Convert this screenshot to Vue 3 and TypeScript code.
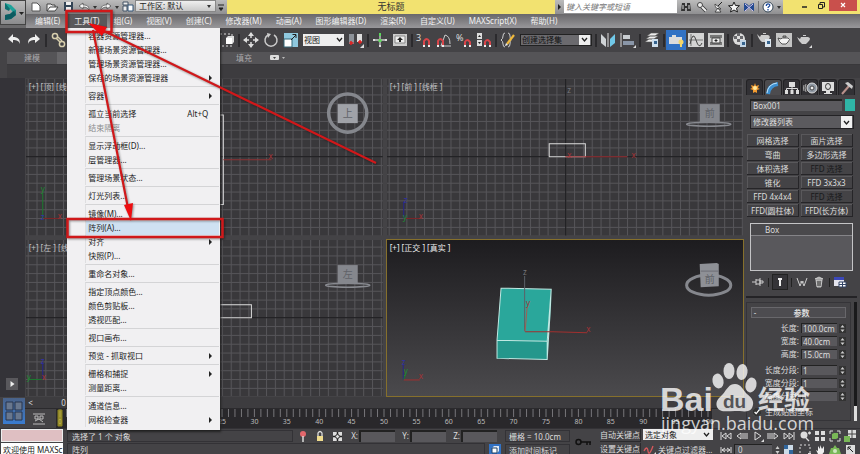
<script setup lang="ts">
import { ref } from 'vue'

interface MenuEntry {
  label: string
  key?: string
  sub?: boolean
  off?: boolean
  on?: boolean
}

const menus = ['编辑(E)', '工具(T)', '组(G)', '视图(V)', '创建(C)', '修改器(M)', '动画(A)', '图形编辑器(D)', '渲染(R)', '自定义(U)', 'MAXScript(X)', '帮助(H)']

const toolGroups: MenuEntry[][] = [
  [{ label: '容器资源管理器...' }, { label: '新建场景资源管理器...' }, { label: '管理场景资源管理器...' }, { label: '保存的场景资源管理器', sub: true }],
  [{ label: '容器', sub: true }],
  [{ label: '孤立当前选择', key: 'Alt+Q' }, { label: '结束隔离', off: true }],
  [{ label: '显示浮动框(D)...' }, { label: '层管理器...' }],
  [{ label: '管理场景状态...' }],
  [{ label: '灯光列表...' }],
  [{ label: '镜像(M)...' }, { label: '阵列(A)...', on: true }, { label: '对齐', sub: true }, { label: '快照(P)...' }],
  [{ label: '重命名对象...' }],
  [{ label: '指定顶点颜色...' }, { label: '颜色剪贴板...' }, { label: '透视匹配...' }],
  [{ label: '视口画布...' }],
  [{ label: '预览 - 抓取视口', sub: true }],
  [{ label: '栅格和捕捉', sub: true }, { label: '测量距离...' }],
  [{ label: '通道信息...' }, { label: '网格检查器', sub: true }],
]

const modifiers = [
  { label: '网格选择' }, { label: '面片选择' },
  { label: '弯曲' }, { label: '多边形选择' },
  { label: '体积选择' }, { label: 'FFD 选择', off: true },
  { label: '锥化' }, { label: 'FFD 3x3x3' },
  { label: 'FFD 4x4x4' }, { label: 'FFD 选择', off: true },
  { label: 'FFD(圆柱体)' }, { label: 'FFD(长方体)' },
]

const sizes = ref([
  { id: 'len', label: '长度:', value: '100.0cm' },
  { id: 'wid', label: '宽度:', value: '40.0cm' },
  { id: 'hei', label: '高度:', value: '15.0cm' },
])
const segments = ref([
  { id: 'lseg', label: '长度分段:', value: '1' },
  { id: 'wseg', label: '宽度分段:', value: '1' },
  { id: 'hseg', label: '高度分段:', value: '1' },
])
const coords = ref([{ axis: 'X', value: '' }, { axis: 'Y', value: '' }, { axis: 'Z', value: '' }])
const objectName = ref('Box001')
const mapping = ref(true)
const frame = ref('0')

const ticks = Array.from({ length: 101 }, (_, i) => ({ n: i, x: 4 + i * 6.48 }))
</script>

<template>
  <div class="app">
    <header class="head">
      <button class="logo" aria-label="应用程序菜单">
        <svg width="26" height="26" viewBox="0 0 26 26">
          <path d="M4 2l6 2 5 5-2 3-4-4-5-1z" fill="#1fa39a" />
          <path d="M4 2v6l4 2 1-2z" fill="#0e6f70" />
          <path d="M15 9v5l-5 4-6 1v-5l5-1 3-3z" fill="#14807f" />
          <path d="M4 14l5-1 4-3 2 4-5 4-6 1z" fill="#0c5b60" />
          <path d="M18 11h5l-2.500 3z" fill="#222" />
        </svg>
      </button>
      <div class="titlebar">
        <div class="quick">
          <button aria-label="新建"><svg viewBox="0 0 14 14"><path d="M3 3h5l3 3v5H3z" fill="#fff" stroke="#555" /></svg></button>
          <button aria-label="打开"><svg viewBox="0 0 14 14"><path d="M2 11V4h4l1 1h3v2" fill="#eee" stroke="#444" /><path d="M2 11l3-4h8l-3 4z" fill="#fff" stroke="#444" /></svg></button>
          <button aria-label="保存"><svg viewBox="0 0 14 14"><path d="M3 2h9v9H3z" fill="#345" /><path d="M5 2h5v3H5zM5 7h5v4H5z" fill="#eee" /></svg></button>
          <button aria-label="撤消"><svg viewBox="0 0 14 14"><path d="M2 6l4-3v2c4 0 6 1 6 5-1-2-3-3-6-3v2z" fill="#f4f4f4" stroke="#444" stroke-width=".7" /></svg></button>
          <i class="caret"></i>
          <button aria-label="重做"><svg viewBox="0 0 14 14"><path d="M12 6L8 3v2c-4 0-6 1-6 5 1-2 3-3 6-3v2z" fill="#f4f4f4" stroke="#444" stroke-width=".7" /></svg></button>
          <i class="caret"></i>
          <button aria-label="项目"><svg viewBox="0 0 14 14"><path d="M2 2h5v3H2zM2 6h4v5H2z" fill="#eee" stroke="#456" /><path d="M7 5h5v6H7z" fill="#fff" stroke="#357" /></svg></button>
        </div>
        <label class="pick workspace">
          <select aria-label="工作区"><option>工作区: 默认</option></select>
          <i class="caret"></i>
        </label>
        <button class="more" aria-label="自定义"><svg viewBox="0 0 10 12"><path d="M2 4h6M3 7h4L5 9.500z" stroke="#222" fill="#222" /></svg></button>
        <h1 class="title">无标题</h1>
        <button class="expand" aria-label="展开"><svg viewBox="0 0 8 14"><path d="M3 4l3 3-3 3z" fill="#222" /></svg></button>
        <input class="search" type="search" placeholder="键入关键字或短语" aria-label="搜索" />
        <div class="info">
          <button aria-label="搜索"><svg viewBox="0 0 14 14"><path d="M3 3h3v3h2V3h3l1 8H8V8H6v3H2z" fill="#333" /><path d="M4 5v4M10 5v4" stroke="#ddd" /></svg></button>
          <button aria-label="工具"><svg viewBox="0 0 14 14"><path d="M5 5l6 6" stroke="#333" stroke-width="3.500" /><path d="M5 5l6 6" stroke="#eee" stroke-width="2" /><circle cx="5" cy="5" r="2.500" fill="#eee" stroke="#444" /></svg></button>
          <button aria-label="通信"><svg viewBox="0 0 14 14"><path d="M4 4c0 4 2 5 6 5zM4 12h6l-3-4z" fill="#f4f4f4" stroke="#333" stroke-width=".8" /><path d="M7 6l4-4" stroke="#222" /></svg></button>
          <button aria-label="收藏"><svg viewBox="0 0 14 14"><path d="M7 2l1.500 3.500 4 .2-3 2.500 1 3.800L7 10l-3.500 2 1-3.800-3-2.500 4-.2z" fill="#f4f4f4" stroke="#222" /></svg></button>
          <button aria-label="交流"><svg viewBox="0 0 14 14"><path d="M2 3l3 1 2 2 2-2 3-1v8l-3-1-2-2-2 2-3 1z" fill="#234a91" /><path d="M3 4l8 7M11 4l-8 7" stroke="#dce" /></svg></button>
          <i class="bar"></i>
          <button aria-label="帮助"><svg viewBox="0 0 14 14"><circle cx="7" cy="7" r="5" fill="#fff" stroke="#345" /><path d="M5.300 6c0-3 3.500-2.500 3.500-.6C8.800 6.600 7 6.500 7 8M7 9v1.500" fill="none" stroke="#1e4ca0" stroke-width="1.300" /></svg></button>
          <i class="caret"></i>
        </div>
        <div class="win">
          <button aria-label="最小化"><svg viewBox="0 0 14 12"><path d="M5 7h5" stroke="#222" stroke-width="1.500" /></svg></button>
          <button aria-label="还原"><svg viewBox="0 0 14 12"><path d="M4.500 4.500h4v4h-4zM6 4V2.500h4.500V7H9" fill="none" stroke="#222" /></svg></button>
          <button class="close" aria-label="关闭"><svg viewBox="0 0 14 12"><path d="M5 3l4 4M9 3L5 7" stroke="#fff" stroke-width="1.200" /></svg></button>
        </div>
      </div>
      <nav class="menubar">
        <div v-for="m in menus" :key="m" class="menu" :class="{ open: m === '工具(T)' }">
          <button>{{ m }}</button>
          <div v-if="m === '工具(T)'" class="drop">
            <div v-for="(g, gi) in toolGroups" :key="gi" class="group">
              <button v-for="e in g" :key="e.label" class="entry" :class="{ off: e.off, on: e.on }" :disabled="e.off">
                <span>{{ e.label }}</span>
                <span v-if="e.key" class="key">{{ e.key }}</span>
                <svg v-if="e.sub" width="4" height="6" viewBox="0 0 4 6"><path d="M0 0l3 3-3 3z" fill="#222" /></svg>
              </button>
            </div>
          </div>
        </div>
      </nav>
    </header>

    <div class="tools">
      <button aria-label="撤消"><svg viewBox="0 0 16 16"><path d="M2 7l5-5v3c5 0 7 2 7 7-1-3-3-4-7-4v3z" fill="#eee" /></svg></button>
      <button aria-label="重做"><svg viewBox="0 0 16 16"><path d="M14 7L9 2v3c-5 0-7 2-7 7 1-3 3-4 7-4v3z" fill="#eee" /></svg></button>
      <i class="sep"></i>
      <button aria-label="链接"><svg viewBox="0 0 16 16"><g fill="none" stroke="#d8cfae" stroke-width="1.500"><circle cx="5" cy="4" r="2.600" /><circle cx="12" cy="12" r="2.600" /><path d="M6 6l4 4M8 5l4 4" /></g></svg></button>
      <button aria-label="断开链接"><svg viewBox="0 0 16 16"><circle cx="5" cy="5" r="3" fill="none" stroke="#ccc" /></svg></button>
      <button aria-label="绑定"><svg viewBox="0 0 16 16"><path d="M2 8q3-6 6 0t6 0" fill="none" stroke="#ccc" /></svg></button>
      <label class="pick filter"><select aria-label="选择过滤器"><option>全部</option></select></label>
      <button aria-label="选择对象"><svg viewBox="0 0 16 16"><path d="M4 2l8 7H8l-4 4z" fill="#ddd" /></svg></button>
      <button aria-label="按名称选择"><svg viewBox="0 0 16 16"><path d="M3 4h10M3 8h10M3 12h10" stroke="#ddd" /></svg></button>
      <button aria-label="窗口/交叉"><svg viewBox="0 0 16 16"><path d="M1 2h12v12H1" fill="none" stroke="#ddd" stroke-dasharray="2 2" /><path d="M7 6l2-2h6v6l-2 2H7z" fill="#ddd" /><path d="M7 6h6v6H7z" fill="#fff" /></svg></button>
      <i class="sep"></i>
      <button aria-label="移动"><svg viewBox="0 0 16 16"><path d="M8 1v14M1 8h14" stroke="#ddd" stroke-width="1.500" stroke-dasharray="5 4" /><path d="M8 0l3 4H5zM8 16l3-4H5zM0 8l4-3v6zM16 8l-4-3v6z" fill="#ddd" /></svg></button>
      <button aria-label="旋转"><svg viewBox="0 0 16 16"><path d="M11 3A6 6 0 1 1 5 3" fill="none" stroke="#ccc" stroke-width="1.500" /><path d="M4 1l4 1-3 4z" fill="#ccc" /></svg></button>
      <button aria-label="缩放"><svg viewBox="0 0 16 16"><path d="M1 1h14v14H1z" fill="#8fc8de" /><path d="M1 7h8v8H1z" fill="#fff" stroke="#367" /><path d="M8 8l5-5M9.500 2.500H13V6" fill="none" stroke="#222" /></svg></button>
      <label class="pick system"><select aria-label="参考坐标系"><option>视图</option></select><svg width="9" height="6" viewBox="0 0 9 6"><path d="M2 1l2.500 3L7 1" fill="none" stroke="#222" stroke-width="1.300" /></svg></label>
      <button aria-label="轴点中心"><svg viewBox="0 0 16 16"><path d="M1 2h5v10H1z" fill="#8d9299" /><path d="M9 2h5v8H9z" fill="#ddd" /><path d="M3 9v4M1.500 11h4M12 8v4M10 10h4" stroke="#e02020" stroke-width="1.500" /><path d="M16 12v4h-4z" fill="#ddd" /></svg></button>
      <i class="sep"></i>
      <button aria-label="操纵"><svg viewBox="0 0 16 16"><path d="M8 2v12M2 8h12" stroke="#ccc" stroke-width="1.300" /><path d="M6.500 7h3v3h-3zM7 1h2v3H7z" fill="#5bd75b" /><path d="M1 7h2v2H1zM13 7h2v2h-2zM7 13h2v2H7z" fill="#ddd" /></svg></button>
      <button aria-label="键盘快捷键覆盖"><svg viewBox="0 0 16 16"><path d="M1 2h14v12H1z" fill="#ccc" /><path d="M3 4h10v7H3z" fill="#eee" stroke="#888" /><path d="M8 5l3 3H9v2H7V8H5z" fill="#222" /></svg></button>
      <i class="sep"></i>
      <button aria-label="捕捉开关"><svg viewBox="0 0 16 16"><text x="0" y="9" font-size="9" fill="#ddd">3</text><path d="M8 14V9q3-4 5 0v5" fill="none" stroke="#d8454a" stroke-width="2" /><path d="M7 13h2v2H7zM12 13h2v2h-2z" fill="#eee" /></svg></button>
      <button aria-label="角度捕捉"><svg viewBox="0 0 16 16"><path d="M15 14H5L9 3q5 1 5 9" fill="none" stroke="#ccc" /><path d="M2 14V9q2-4 5 0v5" fill="none" stroke="#d8454a" stroke-width="2" /><path d="M1 13h2v2H1zM6 13h2v2H6z" fill="#eee" /></svg></button>
      <button aria-label="百分比捕捉"><svg viewBox="0 0 16 16"><text x="0" y="9" font-size="9" fill="#ddd">%</text><path d="M9 14v-4q2-4 5 0v4" fill="none" stroke="#d8454a" stroke-width="2" /><path d="M8 13h2v2H8zM13 13h2v2h-2z" fill="#eee" /></svg></button>
      <button aria-label="微调器捕捉"><svg viewBox="0 0 16 16"><path d="M1 1h5v6H1zM1 8h5v6H1z" fill="#ddd" /><path d="M2 5l1.500-2L5 5zM2 10l1.500 2L5 10z" fill="#222" /><path d="M9 14v-4q2-4 5 0v4" fill="none" stroke="#d8454a" stroke-width="2" /><path d="M8 13h2v2H8zM13 13h2v2h-2z" fill="#eee" /></svg></button>
      <i class="sep"></i>
      <button aria-label="编辑命名选择集"><svg viewBox="0 0 16 16"><path d="M5 1Q3 1 3 4T1 8q2 1 2 4t2 3M8 1q2 0 2 3t1 4q-1 1-1 4t-2 3" fill="none" stroke="#ccc" /><path d="M7 12l7-9" stroke="#f0b93c" stroke-width="2.200" /><path d="M5 14l1-3 2 2z" fill="#eee" /></svg></button>
      <label class="pick sets"><select aria-label="命名选择集"><option>创建选择集</option></select><svg width="11" height="10" viewBox="0 0 11 10"><path d="M0 0h11v10H0z" fill="#eee" /><path d="M3 3l2.500 3L8 3" fill="none" stroke="#222" stroke-width="1.300" /></svg></label>
      <i class="sep"></i>
      <button aria-label="镜像"><svg viewBox="0 0 16 16"><path d="M1 2l5 5v8l-5-4z" fill="#cfd3d6" /><path d="M15 2l-5 5v8l5-4z" fill="#70c8e8" /><path d="M8 1v14" stroke="#ddd" /></svg></button>
      <button aria-label="对齐"><svg viewBox="0 0 16 16"><path d="M1 1v14" stroke="#ddd" /><path d="M3 3h7v4H3z" fill="#c8ccd0" /><path d="M3 9h11v4H3z" fill="#8a96a8" /><path d="M16 13v3h-3z" fill="#ddd" /></svg></button>
      <i class="sep"></i>
      <button aria-label="层管理器"><svg viewBox="0 0 16 16"><path d="M1 10l4-3h8l-4 3zM2 7l4-3h8l-4 3zM3 4l4-3h8l-4 3z" fill="#eee" stroke="#555" stroke-width=".6" /><path d="M8 7h6v8H8z" fill="#cfe0ee" /><path d="M10 9h3v3h-3z" fill="#36648f" /></svg></button>
      <i class="sep"></i>
      <button class="lit" aria-label="切换功能区"><svg viewBox="0 0 16 16"><path d="M1 5h3V3h4v2h6v7H1z" fill="#dcdcdc" /><circle cx="13" cy="10" r="2.500" fill="#f4d56a" /><path d="M12 12h2v3h-2z" fill="#f4d56a" /></svg></button>
      <button aria-label="曲线编辑器"><svg viewBox="0 0 16 16"><path d="M0 1h16v14H0z" fill="#d4d4d4" /><path d="M3 2v12M1 8h14" stroke="#777" /><path d="M2 12q3-14 6-4t6 3" fill="none" stroke="#444" /></svg></button>
      <button aria-label="图解视图"><svg viewBox="0 0 16 16"><path d="M0 1h16v14H0z" fill="#ccc" /><path d="M2 3h12v3H2zM2 10h12v3H2z" fill="#777" /><path d="M4 6h8v5H4z" fill="#eee" stroke="#444" /><path d="M8 7v3M6.500 8.500h3" stroke="#222" /></svg></button>
      <i class="sep"></i>
      <button aria-label="材质编辑器"><svg viewBox="0 0 16 16"><circle cx="7" cy="7" r="6" fill="#ddd" /><path d="M2 4h3v3H2zM8 4h3v3H8zM5 7h3v3H5zM5 1h3v3H5z" fill="#68686c" /><path d="M8 8h6v7H8z" fill="#c3d6e6" /><path d="M10 10h3v3h-3z" fill="#36648f" /></svg></button>
      <i class="sep"></i>
      <button aria-label="渲染设置"><svg viewBox="0 0 16 16"><path d="M1 2l3 3 1-2h7q3 1 1 4l-3 3H6Q3 8 1 2zM7 1h3v1H7z" fill="#ccc" /><path d="M9 7h6v8H9z" fill="#dde6ee" /><path d="M11 9h3v3h-3z" fill="#36648f" /></svg></button>
      <button aria-label="渲染帧窗口"><svg viewBox="0 0 16 16"><path d="M0 1h16v14H0z" fill="#c4c4c4" /><path d="M2 6l3 1 1-1h6q3 1 0 4l-2 2H6Q3 10 2 6zM7 4h3v1H7z" fill="#f4f4f4" stroke="#333" stroke-width=".8" /></svg></button>
      <button aria-label="渲染产品"><svg viewBox="0 0 16 16"><path d="M1 5l3 2 1-2h7q4 1 0 5l-2 2H6Q3 10 1 5zM7 3h3v1H7z" fill="#ccc" /><path d="M16 13v3h-3z" fill="#ddd" /></svg></button>
    </div>

    <div class="ribbon-tabs">
      <button>建模</button>
      <button class="active">自由形式</button>
      <button>选择</button>
      <button>对象绘制</button>
      <button class="fill">填充</button>
      <button class="shrink" aria-label="最小化功能区"><svg width="18" height="8" viewBox="0 0 18 8"><rect x="1" y="1" width="9" height="5" rx="1" fill="#ddd" /><path d="M4 3h3L5.500 5z" fill="#444" /><path d="M13 3h3l-1.500 2z" fill="#bbb" /></svg></button>
    </div>
    <div class="ribbon"></div>

    <main class="body">
      <section class="stage">
        <aside class="rail">
          <button aria-label="展开"><svg width="12" height="12" viewBox="0 0 12 12"><path d="M4.500 3l4 3-4 3z" fill="#eee" /></svg></button>
        </aside>
        <div class="views">
          <svg class="view" viewBox="0 0 356 156" preserveAspectRatio="xMidYMid slice">
            <defs>
              <pattern id="grid" x="178" y="77" width="8.8" height="8.8" patternUnits="userSpaceOnUse"><path d="M0 .5h8.800M.5 0v8.800" stroke="#565559" fill="none" /></pattern>
              <linearGradient id="sky" x1="0" y1="0" x2="0" y2="1"><stop offset="0" stop-color="#1d1c1f" /><stop offset="1" stop-color="#4b4a4d" /></linearGradient>
            </defs>
            <path d="M0 0h356v156H0z" fill="#39383b" /><path d="M0 0h356v156H0z" fill="url(#grid)" />
            <path d="M0 77.500h356" stroke="#151517" />
            <path d="M150 36h47v89h-47" fill="none" stroke="#ddd" />
            <path d="M197 80.500h48" stroke="#8c3033" /><text x="242" y="80" class="red">x</text>
            <path d="M17 139v-25" stroke="#1b7a2e" /><path d="M18 139h16" stroke="#7d2427" />
            <text x="15" y="113" class="green">y</text><text x="32" y="140" class="red">x</text><text x="15" y="141" class="blue">z</text>
            <circle cx="321" cy="34" r="19" fill="none" stroke="#85878d" stroke-width="3.500" />
            <path d="M311 25h20v19h-20z" fill="#a0a2a8" /><text x="316" y="38" class="face">上</text>
            <text x="3" y="11" class="tag">[+] [顶] [线框]</text>
          </svg>
          <svg class="view" viewBox="0 0 356 156" preserveAspectRatio="xMidYMid slice">
            <path d="M0 0h356v156H0z" fill="#39383b" /><path d="M0 0h356v156H0z" fill="url(#grid)" />
            <path d="M0 77.500h356M178.500 0v156" stroke="#151517" />
            <path d="M162 64.500h36v13h-36z" fill="none" stroke="#ddd" />
            <path d="M178 77.500h62" stroke="#9c3236" /><text x="244" y="79" class="red">x</text><text x="180" y="79" class="red">x</text><text x="180" y="14" class="dim">z</text>
            <path d="M17 139v-17" stroke="#25258c" /><path d="M18 139h16" stroke="#7d2427" />
            <text x="17" y="124" class="blue">z</text><text x="32" y="140" class="red">x</text><text x="16" y="141" class="green">y</text>
            <ellipse cx="321" cy="45" rx="22" ry="2" fill="none" stroke="#888a90" stroke-width="1.500" />
            <path d="M312 25h20v19h-20z" fill="#85878d" /><text x="317" y="38" class="face">前</text>
            <text x="3" y="11" class="tag">[+] [前 ] [线框 ]</text>
          </svg>
          <svg class="view" viewBox="0 0 356 156" preserveAspectRatio="xMidYMid slice">
            <path d="M0 0h356v156H0z" fill="#39383b" /><path d="M0 0h356v156H0z" fill="url(#grid)" />
            <path d="M0 77.500h356" stroke="#151517" />
            <path d="M130 64.500h95v13h-95z" fill="none" stroke="#ddd" />
            <path d="M17 139v-17" stroke="#25258c" /><path d="M2 139h15" stroke="#1b7a2e" />
            <text x="15" y="124" class="blue">z</text><text x="1" y="140" class="green">y</text><text x="16" y="140" class="red">x</text>
            <ellipse cx="321" cy="45" rx="22" ry="2" fill="none" stroke="#888a90" stroke-width="1.500" />
            <path d="M311 25h20v19h-20z" fill="#85878d" /><text x="316" y="38" class="face">左</text>
            <text x="3" y="11" class="tag">[+] [左 ] [线框 ]</text>
          </svg>
          <svg class="view current" viewBox="0 0 356 156" preserveAspectRatio="xMidYMid slice">
            <path d="M0 0h356v156H0z" fill="url(#sky)" />
            <path d="M114 48l50 1-4 52-50-1z" fill="#2aa79b" /><path d="M110 100l50 1v18l-50-1z" fill="#24978c" />
            <path d="M160 101l4-52v16l-4 54z" fill="#1a5f5a" />
            <path d="M114 48l50 1-1 22-3 48-50-1v-18zM110 100l50 1v18M160 101l4-52" fill="none" stroke="#bfe9e3" />
            <path d="M137.500 91V36" stroke="#5b6168" /><text x="136" y="35" class="dim">z</text>
            <path d="M138 91l2-24" stroke="#a35f50" /><text x="139" y="66" class="red">y</text>
            <path d="M138 91.500h28l34 1" stroke="#a1302f" fill="none" /><text x="199" y="92" class="red">x</text>
            <path d="M16.500 139v-15" stroke="#25258c" /><path d="M17 139l2-6" stroke="#1b7a2e" /><path d="M17 139.500h16" stroke="#a1302f" />
            <text x="15" y="125" class="blue">z</text><text x="17" y="134" class="green">y</text><text x="32" y="139" class="red">x</text>
            <ellipse cx="321" cy="45" rx="22" ry="10" fill="none" stroke="#85878d" stroke-width="3" />
            <path d="M312 24l17-1 2 1v22l-18 1z" fill="#8e9096" /><path d="M313 31h18" stroke="#6d6f75" /><text x="317" y="43" class="face">前</text>
            <text x="3" y="11" class="tag lighter">[+] [正交 ] [真实 ]</text>
          </svg>
        </div>
        <button class="layout" aria-label="视口布局"><svg width="22" height="26" viewBox="0 0 22 26"><path d="M3 4h7v8H3zM12 4h7v8h-7zM3 14h7v8H3zM12 14h7v8h-7z" fill="#68778e" stroke="#26354d" /></svg></button>
        <div class="slider"><button aria-label="上一帧">&lt;</button><span>0 / 100</span></div>
        <div class="track">
          <button aria-label="迷你曲线编辑器"><svg width="14" height="12" viewBox="0 0 14 12"><path d="M1 1h12M1 11h12M3 3h3v3H3zM8 3h3v3H8zM3 8l4-2 4 3" fill="none" stroke="#bbb" /></svg></button>
          <svg class="ruler" viewBox="0 0 689 19" preserveAspectRatio="xMinYMin meet">
            <path d="M0 0h656v19H0z" fill="#29282b" />
            <g v-for="t in ticks" :key="t.n">
              <path :d="`M${t.x} 0v8`" stroke="#77767a" />
              <text v-if="t.n % 5 === 0" :x="t.x" y="15" class="num">{{ t.n }}</text>
            </g>
            <path d="M2 1h4v16H2z" fill="#c6b82e" fill-opacity=".7" stroke="#8d8420" />
          </svg>
        </div>
      </section>

      <aside class="panel">
        <div class="tabs">
          <button aria-label="创建"><svg viewBox="0 0 16 14"><path d="M8 2l1 3 3-1-1 3 2 1-3 1v3l-2-1-2 1V9L3 8l2-1-1-3 3 1z" fill="#f29b30" /><circle cx="8" cy="7" r="2" fill="#ffe9a0" /></svg></button>
          <button class="active" aria-label="修改"><svg viewBox="0 0 16 14"><path d="M3 13Q4 4 13 3" fill="none" stroke="#3d8fd0" stroke-width="4" /><path d="M2 12Q3 3 12 2" fill="none" stroke="#bfe3fa" /></svg></button>
          <button aria-label="层次"><svg viewBox="0 0 16 14"><path d="M5 1h6v5H5zM1 9h3v4H1zM6.500 9h3v4h-3zM12 9h3v4h-3z" fill="#ddd" /><path d="M2.500 9V7.500h11V9M8 6v3" fill="none" stroke="#ddd" /></svg></button>
          <button aria-label="运动"><svg viewBox="0 0 16 14"><circle cx="10" cy="7" r="5" fill="#8f98a3" stroke="#ddd" /><circle cx="10" cy="7" r="2" fill="#eee" stroke="#444" /><path d="M4 3q-2 4 0 8M2 4q-1 3 0 6" fill="none" stroke="#aaa" /></svg></button>
          <button aria-label="显示"><svg viewBox="0 0 16 14"><path d="M2 1h12v9H2zM6 10h4v2H6zM4 12h8v1H4z" fill="#ddd" /><ellipse cx="8" cy="5.500" rx="2.500" ry="3" fill="none" stroke="#333" /></svg></button>
          <button aria-label="实用程序"><svg viewBox="0 0 16 14"><path d="M3 13l7-8" stroke="#b9908a" stroke-width="2" /><path d="M6 2l3-1 5 4-1 3-4-3z" fill="#ccc" /></svg></button>
        </div>
        <div class="name">
          <input v-model="objectName" aria-label="对象名称" />
          <button class="swatch" aria-label="对象颜色"></button>
        </div>
        <label class="pick mods"><select aria-label="修改器列表"><option>修改器列表</option></select><svg width="11" height="12" viewBox="0 0 11 12"><path d="M0 0h11v12H0z" fill="#f2f2f2" /><path d="M3 5l2.500 3L8 5" fill="none" stroke="#222" stroke-width="1.300" /></svg></label>
        <div class="sets-grid">
          <button v-for="(b, i) in modifiers" :key="i" :disabled="b.off">{{ b.label }}</button>
        </div>
        <ul class="stack"><li>Box</li></ul>
        <div class="stack-tools">
          <button aria-label="锁定堆栈"><svg viewBox="0 0 14 14"><path d="M1 7h4M5 4v6M5 5h4v4H5M9 3v8M9 6h3v2H9" fill="none" stroke="#ccc" /></svg></button>
          <i></i>
          <button class="boxed" aria-label="显示最终结果"><svg viewBox="0 0 14 14"><path d="M5 3h4v2H8v6H6V5H5z" fill="#eee" /></svg></button>
          <i></i>
          <button aria-label="使唯一"><svg viewBox="0 0 14 14"><path d="M2 3l3 8 2-5 2 5 3-8M5 7h4" fill="none" stroke="#ccc" /></svg></button>
          <button aria-label="移除修改器"><svg viewBox="0 0 14 14"><path d="M4 5h6l-1 7H5zM3 4l4-2 4 2z" fill="#999" stroke="#ddd" stroke-width=".8" /><path d="M6 6v5M8 6v5" stroke="#444" /></svg></button>
          <i></i>
          <button aria-label="配置修改器集"><svg viewBox="0 0 14 14"><path d="M1 2h10v9H1z" fill="#e4e4ee" /><path d="M1 2h10v3H1z" fill="#3c48b8" /><path d="M6 7h7v5H6z" fill="#fff" stroke="#346" /><path d="M9.500 7v5M6 9.500h7" stroke="#346" /></svg></button>
        </div>
        <div class="rollout">
          <div class="inner">
            <button class="bar-title"><span>-</span><b>参数</b></button>
            <div class="rows">
              <div v-for="p in sizes" :key="p.id" class="row">
                <label :for="p.id">{{ p.label }}</label><input :id="p.id" v-model="p.value" />
                <svg width="7" height="9" viewBox="0 0 7 9"><path d="M0 0h7v9H0z" fill="#333" /><path d="M1.500 3.500l2-2.500 2 2.500zM1.500 5.500l2 2.500 2-2.500z" fill="#ccc" /></svg>
              </div>
            </div>
            <div class="rows">
              <div v-for="p in segments" :key="p.id" class="row">
                <label :for="p.id">{{ p.label }}</label><input :id="p.id" v-model="p.value" />
                <svg width="7" height="9" viewBox="0 0 7 9"><path d="M0 0h7v9H0z" fill="#333" /><path d="M1.500 3.500l2-2.500 2 2.500zM1.500 5.500l2 2.500 2-2.500z" fill="#ccc" /></svg>
              </div>
            </div>
            <label class="check"><input v-model="mapping" type="checkbox" />生成贴图坐标</label>
          </div>
          <div class="scroll"><i></i></div>
        </div>
      </aside>
    </main>

    <footer class="foot">
      <div class="script">
        <div class="pink"></div>
        <div class="listener">欢迎使用 MAXSc</div>
      </div>
      <div class="status">
        <div class="line">
          <output class="well">选择了 1 个 对象</output>
          <button aria-label="孤立"><svg viewBox="0 0 12 12"><circle cx="6" cy="4" r="3" fill="#e2676c" /><path d="M6 6v6" stroke="#ddd" stroke-width="1.500" /></svg></button>
          <button aria-label="锁定"><svg viewBox="0 0 12 12"><path d="M3 6h6v5H3z" fill="#f0dc8e" /><path d="M4 6V3q2-3 4 0v3" fill="none" stroke="#ddd" stroke-width="1.300" /></svg></button>
          <button aria-label="绝对模式"><svg viewBox="0 0 12 12"><path d="M2 2h9v9H2z" fill="#ddd" /><path d="M2 6.500h2M9 6.500h2M6.500 2v2M6.500 9v2" stroke="#222" stroke-width="1.500" /><circle cx="6.500" cy="6.500" r="2" fill="none" stroke="#222" /></svg></button>
          <label v-for="c in coords" :key="c.axis" class="coord">{{ c.axis }}:<input v-model="c.value" /></label>
          <output class="gridsize">栅格 = 10.0cm</output>
        </div>
        <div class="line">
          <output class="well prompt">阵列</output>
          <button class="lit" aria-label="自适应降级"><svg viewBox="0 0 12 12"><path d="M3 4l2-2h5v5l-2 2H3z" fill="#dfe8f4" /><path d="M3 4h5v5H3z" fill="#fff" stroke="#246" /></svg></button>
          <output class="gridsize">添加时间标记</output>
        </div>
      </div>
      <button class="setkey" aria-label="设置关键点"><svg width="20" height="14" viewBox="0 0 20 14"><circle cx="4.500" cy="7" r="2.500" fill="none" stroke="#111" stroke-width="1.500" /><path d="M7 7h10M13 7v3M16 7v3" stroke="#111" stroke-width="1.500" /></svg></button>
      <div class="keys">
        <button>自动关键点</button>
        <label class="pick sel"><select aria-label="选定对象"><option>选定对象</option></select><svg width="9" height="6" viewBox="0 0 9 6"><path d="M2 1l2.500 3L7 1" fill="none" stroke="#222" stroke-width="1.300" /></svg></label>
        <button>设置关键点</button>
        <div class="keyfilter"><svg width="14" height="12" viewBox="0 0 14 12"><path d="M1 7q3-6 4 0t5-5" fill="none" stroke="#d8585c" stroke-width="1.300" /><path d="M13 8v3h-3z" fill="#ddd" /></svg><button>关键点过滤器...</button></div>
      </div>
      <div class="play">
        <div class="line">
          <button aria-label="转至开头"><svg viewBox="0 0 12 12"><path d="M1 2v8M6 3L2 6l4 3zM11 3L7 6l4 3z" fill="none" stroke="#ddd" /></svg></button>
          <button aria-label="上一帧"><svg viewBox="0 0 12 12"><path d="M5 3L1 6l4 3zM7 3v6M9 3v6M11 3v6" fill="none" stroke="#ddd" /></svg></button>
          <button aria-label="播放"><svg viewBox="0 0 12 12"><path d="M3 2l6 4-6 4z" fill="none" stroke="#ddd" /><path d="M12 9v3H9z" fill="#ddd" /></svg></button>
          <button aria-label="下一帧"><svg viewBox="0 0 12 12"><path d="M7 3l4 3-4 3zM5 3v6M3 3v6M1 3v6" fill="none" stroke="#ddd" /></svg></button>
          <button aria-label="转至结尾"><svg viewBox="0 0 12 12"><path d="M11 2v8M6 3l4 3-4 3zM1 3l4 3-4 3z" fill="none" stroke="#ddd" /></svg></button>
        </div>
        <div class="line">
          <button aria-label="关键点模式"><svg viewBox="0 0 12 12"><path d="M1 3v6M11 3v6M2 6h8M5 4L2 6l3 2M7 4l3 2-3 2" fill="none" stroke="#ddd" /></svg></button>
          <input v-model="frame" aria-label="当前帧" />
          <svg width="7" height="10" viewBox="0 0 7 10"><path d="M1.500 4l2-3 2 3zM1.500 6l2 3 2-3z" fill="#ccc" /></svg>
          <button aria-label="时间配置"><svg viewBox="0 0 12 12"><path d="M1 1h9v9H1z" fill="#ccdbe8" /><path d="M1 1h4v4H1zM6 6h4v4H6z" fill="#32669c" /></svg></button>
        </div>
      </div>
      <div class="nav">
        <button aria-label="缩放"><svg viewBox="0 0 12 12"><circle cx="5" cy="5" r="3.500" fill="#ddd" /><path d="M7 8l3 3M9 3h3M10.500 1.500v3" stroke="#ddd" stroke-width="1.300" /></svg></button>
        <button aria-label="缩放所有"><svg viewBox="0 0 12 12"><path d="M1 1h4v4H1zM7 1h4v4H7zM1 7h4v4H1zM7 7h4v4H7z" fill="#ddd" /></svg></button>
        <button aria-label="最大化显示"><svg viewBox="0 0 12 12"><path d="M1 4V1h3M8 1h3v3M11 8v3H8M4 11H1V8" fill="none" stroke="#ddd" /><path d="M3 4l2-1h4v5L7 9H3z" fill="#79b857" /></svg></button>
        <button aria-label="所有视图最大化"><svg viewBox="0 0 12 12"><path d="M4 0h8v8H4z" fill="#ddd" /><path d="M0 6h6v6H0z" fill="#79b857" /><path d="M8 0v8M4 4h8" stroke="#444" /></svg></button>
        <button aria-label="缩放区域"><svg viewBox="0 0 12 12"><path d="M1 1h10v10H1z" fill="none" stroke="#ddd" stroke-dasharray="2 2" /><path d="M9 9h3v3H9z" fill="#ddd" /></svg></button>
        <button aria-label="平移"><svg viewBox="0 0 12 12"><path d="M2 6l2 1V2l2 3V1l2 4 2-3v6l-3 4H5z" fill="#eee" /></svg></button>
        <button aria-label="环绕"><svg viewBox="0 0 12 12"><path d="M6 1l2 3h2l2 6H0l2-6h2z" fill="#79b857" /><circle cx="6" cy="7" r="2" fill="#cfe6c0" /></svg></button>
        <button aria-label="最大化视口"><svg viewBox="0 0 12 12"><path d="M2 1h9v9H2z" fill="#ddd" /><path d="M4 3l5 5M4 6V3h3" stroke="#222" fill="none" /></svg></button>
      </div>
    </footer>

    <svg class="marks" width="400" height="250" viewBox="0 0 400 250">
      <g fill="none" stroke="#d0181a" stroke-width="2.500">
        <rect x="66.500" y="11" width="45" height="21" />
        <rect x="67.500" y="219" width="155" height="18" />
        <path d="M376 163L100 29M93 30l35 178" stroke-width="2.200" />
      </g>
      <path d="M88 23l19 4-5 9zM131 221l-7-16 9-2z" fill="#ee0d10" />
    </svg>
    <svg class="stamp" width="152" height="78" viewBox="0 0 152 78" fill="#fff" fill-opacity=".78">
      <text x="0" y="49" font-size="34" font-weight="700">Bai</text>
      <ellipse cx="58" cy="19" rx="5.500" ry="7.500" transform="rotate(-12 58 19)" />
      <ellipse cx="69" cy="9" rx="5.500" ry="8" /><ellipse cx="82" cy="10" rx="5.500" ry="8" transform="rotate(8 82 10)" />
      <ellipse cx="91" cy="23" rx="5.500" ry="7.500" transform="rotate(14 91 23)" />
      <path d="M75 22c6 0 8 6 12 10 5 4 8 8 5 14-3 5-9 3-17 3s-15 2-18-4c-2-6 2-9 6-13 4-5 6-10 12-10z" />
      <text x="63" y="46" font-size="19" font-weight="700" fill="#555458" fill-opacity="1">du</text>
      <text x="98" y="47" font-size="26" font-weight="700" class="cn">经验</text>
      <text x="1" y="68" font-size="18" class="url">jingyan.baidu.com</text>
    </svg>
  </div>
</template>

<style>
html, body { background: #444346; overflow: hidden; }
</style>

<style scoped>
.app {
  position: relative;
  display: grid;
  grid-template-rows: auto 24px 13px 13px 1fr 26px;
  height: 100vh;
  overflow: hidden;
  background: #444346;
  color: #dcdcdc;
  font: 8px/12px "Noto Sans", "Noto Sans CJK SC", sans-serif;
}
.app * { box-sizing: border-box; }
button, input, select {
  margin: 0; padding: 0; border: 0; border-radius: 0;
  background: none; color: inherit; font: inherit; min-width: 0;
}
button { white-space: nowrap; }
svg { display: block; }
.pick { display: flex; align-items: center; }
.pick select { flex: 1; appearance: none; outline: 0; }
.caret { border: 2px solid transparent; border-top: 3px solid #333; border-bottom: 0; }

.head { display: grid; grid-template: 14px 14px / 26px 1fr; background: #6b6a6c; }
.logo { grid-row: 1 / 3; height: 25px; background: linear-gradient(#bcbcbc, #8b8b8d); border: 1px solid #444; }
.titlebar { display: flex; background: linear-gradient(#bcbcbc, #8f8f91); min-width: 0; }
.quick { display: flex; align-items: center; width: 109px; padding-left: 3px; justify-content: space-between; }
.quick svg, .info svg { width: 14px; height: 14px; }
.workspace { width: 81px; height: 12px; padding: 0 4px 0 3px; background: linear-gradient(#efefef, #c9c9c9); border: 1px solid #888; color: #222; }
.more { width: 11px; padding: 0; }
.more svg { width: 10px; height: 12px; }
.title { flex: 1; margin: 0; background: #f2e270; color: #333; font-size: 9px; line-height: 14px; font-weight: 400; text-align: center; }
.expand { width: 9px; }
.expand svg { width: 8px; height: 14px; }
.search { width: 113px; height: 13px; background: #fff; font-style: italic; outline: 0; color: #333; padding-left: 2px; appearance: none; }
.search::placeholder { color: #777; }
.info { display: flex; align-items: center; justify-content: space-between; width: 106px; padding: 0 2px; }
.bar { width: 1px; height: 12px; background: #777; }
.win { display: flex; width: 77px; background: #f2e270; padding-left: 12px; align-items: flex-start; }
.win svg { width: 14px; height: 12px; margin: 0 auto; }
.win button { width: 17px; }
.win .close { width: 28px; height: 11px; background: #c9504c; }

.menubar { display: flex; padding-left: 2px; background: linear-gradient(#69686b, #98979a); color: #f2f2f2; }
.menu { position: relative; display: flex; }
.menu > button { padding: 0 7px; line-height: 14px; }
.menu.open > button { background: #59585b; }
.drop {
  position: absolute; z-index: 3; top: 14px; left: 0; width: 153px; padding: 1px 1px 3px 18px;
  background: #f1f0f2; color: #222; box-shadow: 1px 2px 2px #222;
}
.group { border-left: 1px solid #dedee0; }
.group + .group { border-top: 1px solid #d4d4d6; margin-top: 1px; padding-top: 2px; }
.entry { display: flex; align-items: center; justify-content: space-between; width: 100%; height: 14px; padding: 0 6px 0 2px; text-align: left; }
.entry .key { margin-right: 5px; }
.entry.off { color: #8b8b8d; }
.entry.on { background: #cfe1f2; }

.tools { display: flex; align-items: center; gap: 4px; padding-left: 6px; background: #444346; }
.tools > button { flex: none; }
.tools button svg { width: 16px; height: 16px; overflow: visible; }
.sep { width: 0; height: 11px; box-shadow: 0 0 0 1px #2b2a2d; }
.filter { width: 65px; height: 12px; background: #eee; color: #222; }
.system { width: 41px; height: 12px; padding-left: 1px; background: #eee; color: #222; }
.sets { width: 72px; height: 12px; padding: 1px; background: #6b6a6e; border: 1px solid #222; color: #111; }
.tools .lit { background: #3272c4; box-shadow: 0 0 0 2px #3272c4; }

.ribbon-tabs { display: flex; margin-left: 7px; background: #555457; border-bottom: 1px solid #39383b; color: #aaa9ac; }
.ribbon-tabs button { padding: 0 17px; }
.ribbon-tabs .active { background: #68676a; padding: 0 14px; }
.ribbon-tabs .fill { padding-left: 3px; }
.ribbon-tabs .shrink { padding: 0; }
.ribbon { margin-left: 7px; background: #3d3c3f; }

.body { display: grid; grid-template-columns: 1fr 115px; min-height: 0; }
.stage { display: grid; grid-template: minmax(0, 1fr) 12px 19px / 25px minmax(0, 1fr); min-height: 0; }
.rail { display: flex; align-items: flex-end; padding: 0 0 7px 6px; background: #343338; }
.rail button { background: #59585c; }
.views { display: grid; grid-template: minmax(0, 1fr) minmax(0, 1fr) / minmax(0, 1fr) minmax(0, 1fr); gap: 4px; padding: 1px 2px 1px 1px; min-height: 0; }
.view { width: 100%; height: 100%; }
.current { outline: 1px solid #86702c; }
.view text { font-size: 8px; }
.view .tag { fill: #c0c0c2; }
.view .lighter { fill: #eee; }
.view .red { fill: #a83236; }
.view .green { fill: #1f8a34; }
.view .blue { fill: #3030a8; }
.view .dim { fill: #77767a; }
.view .face { fill: #606268; font-size: 10px; }
.layout { grid-row: 2 / 4; align-self: start; justify-self: end; margin-top: 1px; background: linear-gradient(#4a6288, #3a7cd0); }
.slider { display: flex; align-items: center; gap: 4px; padding-left: 2px; background: #3d3c3f; border-bottom: 1px solid #2b2a2d; }
.slider button { width: 7px; }
.slider span { width: 72px; text-align: center; }
.track { display: flex; gap: 11px; padding-left: 7px; }
.track button { align-self: center; width: 13px; }
.ruler { flex: 1; min-width: 0; height: 19px; }
.ruler text { font-size: 7px; fill: #bbb; text-anchor: middle; }

.panel { display: flex; flex-direction: column; padding: 1px 5px 0 1px; min-height: 0; }
.tabs { display: grid; grid-template-columns: repeat(6, 1fr); gap: 1px; height: 16px; }
.tabs button { background: #323135; border: 1px solid #232225; border-bottom: 0; border-radius: 3px 3px 0 0; }
.tabs .active { background: #4c4b4e; }
.tabs svg { width: 16px; height: 14px; margin: 0 auto; }
.name { display: flex; gap: 3px; margin: 4px 0 4px 4px; }
.name input { flex: 1; height: 12px; padding-left: 2px; background: #5b5a5e; border: solid #222; border-width: 2px 0 0 1px; }
.swatch { width: 10px; height: 12px; background: #2fb5a6; }
.mods { height: 14px; margin: 0 1px 5px 4px; padding: 1px 1px 1px 2px; background: #5b5a5e; border: 1px solid #232225; }
.sets-grid { display: grid; grid-template-columns: 1fr 1fr; gap: 1px 2px; margin: 0 2px 6px 1px; }
.sets-grid button { height: 13px; line-height: 11px; border: solid #262528; border-width: 0 1px 1px 0; box-shadow: inset 1px 1px 0 #59585b; overflow: visible; }
.sets-grid button:disabled { color: #19191b; }
.stack { height: 48px; margin: 0 2px 3px 4px; padding: 0; list-style: none; background: #59585c; border: 1px solid #c4c4c6; }
.stack li { height: 12px; padding-left: 14px; border-bottom: 1px solid #858488; background: #4a494c; }
.stack-tools { display: flex; align-items: center; justify-content: space-between; height: 16px; margin: 0 8px 6px 5px; }
.stack-tools svg { width: 14px; height: 14px; }
.stack-tools i { width: 1px; height: 9px; background: #222; }
.stack-tools .boxed { background: #353438; border: 1px solid #222; }
.rollout { display: flex; gap: 3px; padding-top: 4px; border-top: 2px solid #242326; margin-right: -2px; }
.inner { flex: 1; padding: 4px 4px 0; border: 1px solid #353438; min-width: 0; }
.bar-title { display: flex; width: 100%; height: 11px; line-height: 9px; border: 1px solid #68676b; background: #4d4c50; }
.bar-title b { flex: 1; }
.bar-title span { width: 6px; }
.rows { display: grid; gap: 1px; padding-top: 4px; }
.row { display: grid; grid-template-columns: 1fr 36px 7px; gap: 2px; align-items: center; height: 12px; text-align: right; }
.row label { white-space: nowrap; }
.row input { width: 36px; height: 10px; line-height: 8px; padding-left: 1px; background: #59585c; border: solid #222; border-width: 1px 0 0 1px; }
.check { display: flex; align-items: center; gap: 4px; padding: 4px 0 0 2px; white-space: nowrap; }
.check input { width: 8px; height: 8px; accent-color: #333; }
.scroll { display: flex; align-items: flex-end; width: 3px; height: 119px; background: #19191b; }
.scroll i { width: 3px; height: 15px; background: #ddd; }

.foot { display: flex; gap: 4px; min-height: 0; border-top: 1px solid #333236; }
.foot .line { display: flex; align-items: center; height: 13px; gap: 3px; }
.foot svg { flex: none; }
.script { display: grid; grid-template-rows: 13px 13px; width: 63px; gap: 1px; padding-left: 1px; }
.pink { background: #dfbfc2; border: 1px solid #eee; }
.listener { background: #fff; color: #222; padding-left: 2px; white-space: nowrap; line-height: 13px; }
.status { display: grid; grid-template-rows: 13px 13px; gap: 1px; flex: 1; min-width: 0; }
.status button svg { width: 12px; height: 12px; }
.status .line button { margin: 0 1px; }
.well { flex: 1; height: 12px; padding-left: 4px; line-height: 12px; border: 1px solid #333236; white-space: nowrap; }
.well.prompt { height: 13px; }
.status .lit { background: #3272c4; }
.coord { display: flex; align-items: center; width: 48px; gap: 1px; justify-content: flex-end; }
.coord input { width: 36px; height: 12px; background: #59585c; border: solid #222; border-width: 2px 0 0 2px; }
.gridsize { width: 65px; height: 12px; padding-left: 3px; line-height: 12px; border: 1px solid #333236; white-space: nowrap; }
.coord + .gridsize { margin-left: 5px; }
.setkey { width: 22px; }
.keys { display: grid; grid-template: 13px 13px / 41px 70px; gap: 1px 2px; }
.keys button { text-align: left; }
.keys > button { border: solid #2b2a2d; border-width: 0 1px 1px 0; overflow: visible; }
.sel { padding: 0 2px; height: 11px; background: #eee; color: #222; }
.keyfilter { display: flex; align-items: center; gap: 1px; }
.play { width: 75px; display: grid; grid-template: 13px 13px / minmax(0, 1fr); gap: 1px; margin-left: 3px; }
.play .line { justify-content: space-between; }
.play .line + .line { gap: 2px; }
.play button { flex: none; }
.play button svg { width: 12px; height: 12px; }
.play input { flex: 1; width: 0; height: 12px; padding-left: 3px; background: #59585c; border: solid #222; border-width: 1px 0 0 1px; }
.nav { display: grid; grid-template: 13px 13px / repeat(4, 12px); gap: 1px 3px; padding-right: 4px; }
.nav svg { width: 12px; height: 12px; }

.marks { position: absolute; z-index: 5; top: 0; left: 0; pointer-events: none; filter: drop-shadow(1px 1px 1px #0006); }
.stamp { position: absolute; z-index: 5; right: 48px; bottom: 14px; pointer-events: none; overflow: visible; font-family: "Liberation Sans", sans-serif; }
.stamp .cn { font-family: "Noto Sans CJK SC", sans-serif; }
.stamp .url { font-family: "Open Sans", sans-serif; }
</style>
